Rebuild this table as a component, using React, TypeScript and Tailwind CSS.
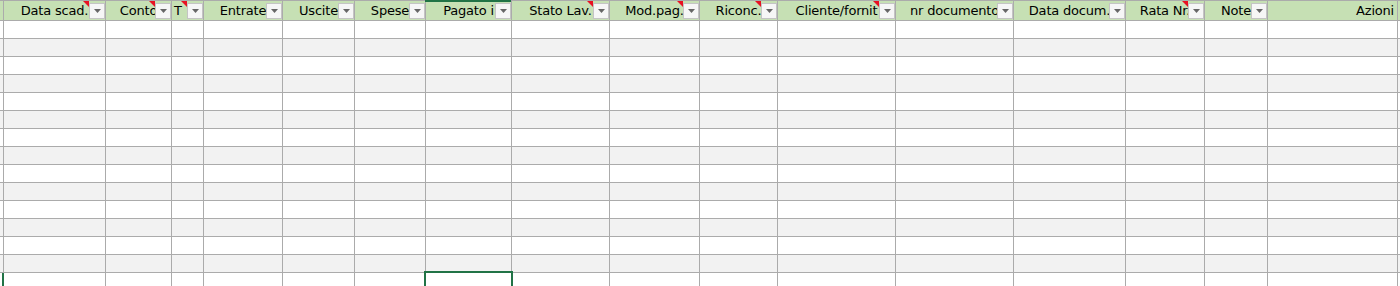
type Col = { label: string; w: string; comment?: boolean; filter?: boolean; align?: 'center' | 'left' | 'right' }

const cols: Col[] = [
  { label: 'Data scad.', w: 'w-[102px]', comment: true, filter: true },
  { label: 'Conto', w: 'w-[66px]', comment: true, filter: true },
  { label: 'T', w: 'w-[32px]', comment: true, filter: true, align: 'left' },
  { label: 'Entrate', w: 'w-[79px]', filter: true },
  { label: 'Uscite', w: 'w-[72px]', filter: true },
  { label: 'Spese', w: 'w-[71px]', filter: true },
  { label: 'Pagato i', w: 'w-[86px]', filter: true },
  { label: 'Stato Lav.', w: 'w-[98px]', comment: true, filter: true },
  { label: 'Mod.pag.', w: 'w-[90px]', comment: true, filter: true },
  { label: 'Riconc.', w: 'w-[78px]', comment: true, filter: true },
  { label: 'Cliente/fornit', w: 'w-[118px]', comment: true, filter: true },
  { label: 'nr documento', w: 'w-[118px]', filter: true },
  { label: 'Data docum.', w: 'w-[112px]', filter: true },
  { label: 'Rata Nr.', w: 'w-[79px]', comment: true, filter: true },
  { label: 'Note', w: 'w-[63px]', filter: true },
  { label: 'Azioni', w: 'w-[130px]', align: 'right' },
]

const SELECTED_COL = 6
const ROWS = 15

function FilterButton() {
  return (
    <div className="absolute right-0 top-[2px] z-10 w-[16px] h-[16px] border border-[#c4c4c4] bg-[#f6f6f6] flex items-center justify-center">
      <svg width="7" height="4" viewBox="0 0 7 4">
        <path d="M0 0h7L3.5 4z" fill="#666" />
      </svg>
    </div>
  )
}

function HeaderCell({ col, selected }: { col: Col; selected: boolean }) {
  const align =
    col.align === 'right' ? 'justify-end pr-[3px]' : col.align === 'left' ? 'justify-start pl-[2px]' : 'justify-center'
  return (
    <div className={`relative h-full flex-shrink-0 border-r border-[#ababab] ${col.w}`}>
      {selected && <div className="absolute -top-[1px] -left-[1px] right-0 h-[2px] bg-[#217346]" />}
      <div className={`h-full overflow-hidden flex items-center whitespace-nowrap ${align}`}>
        <span>{col.label}</span>
      </div>
      {col.comment && (
        <div className="absolute top-0 right-[16px] z-20 w-0 h-0 border-t-[6px] border-l-[6px] border-t-[#e81123] border-l-transparent" />
      )}
      {col.filter && <FilterButton />}
    </div>
  )
}

export default function App() {
  return (
    <div
      className="w-[1400px] h-[286px] overflow-hidden bg-white text-[13px] tracking-[-0.2px] text-black"
      style={{ fontFamily: '"DejaVu Sans", Verdana, sans-serif' }}
    >
      <div className="h-[1px] bg-[#ababab]" />

      {/* header row */}
      <div className="flex h-[20px] bg-[#c6e0b4] border-b border-[#ababab]">
        <div className="w-[4px] flex-shrink-0 border-r border-[#ababab]" />
        {cols.map((c, i) => (
          <HeaderCell key={c.label} col={c} selected={i === SELECTED_COL} />
        ))}
      </div>

      {/* data rows */}
      {Array.from({ length: ROWS }).map((_, r) => {
        const last = r === ROWS - 1
        return (
          <div
            key={r}
            className={`flex h-[18px] border-b border-[#ababab] ${r % 2 === 1 ? 'bg-[#f2f2f2]' : 'bg-white'}`}
          >
            <div
              className={`w-[4px] flex-shrink-0 ${
                last ? 'border-r-2 border-[#217346]' : 'border-r border-[#ababab]'
              }`}
            />
            {cols.map((c, i) => (
              <div key={c.label} className={`relative h-full flex-shrink-0 border-r border-[#ababab] ${c.w}`}>
                {last && i === SELECTED_COL && (
                  <div className="absolute -left-[2px] -right-[2px] -top-[2px] h-[22px] border-2 border-[#217346]" />
                )}
              </div>
            ))}
          </div>
        )
      })}
    </div>
  )
}
